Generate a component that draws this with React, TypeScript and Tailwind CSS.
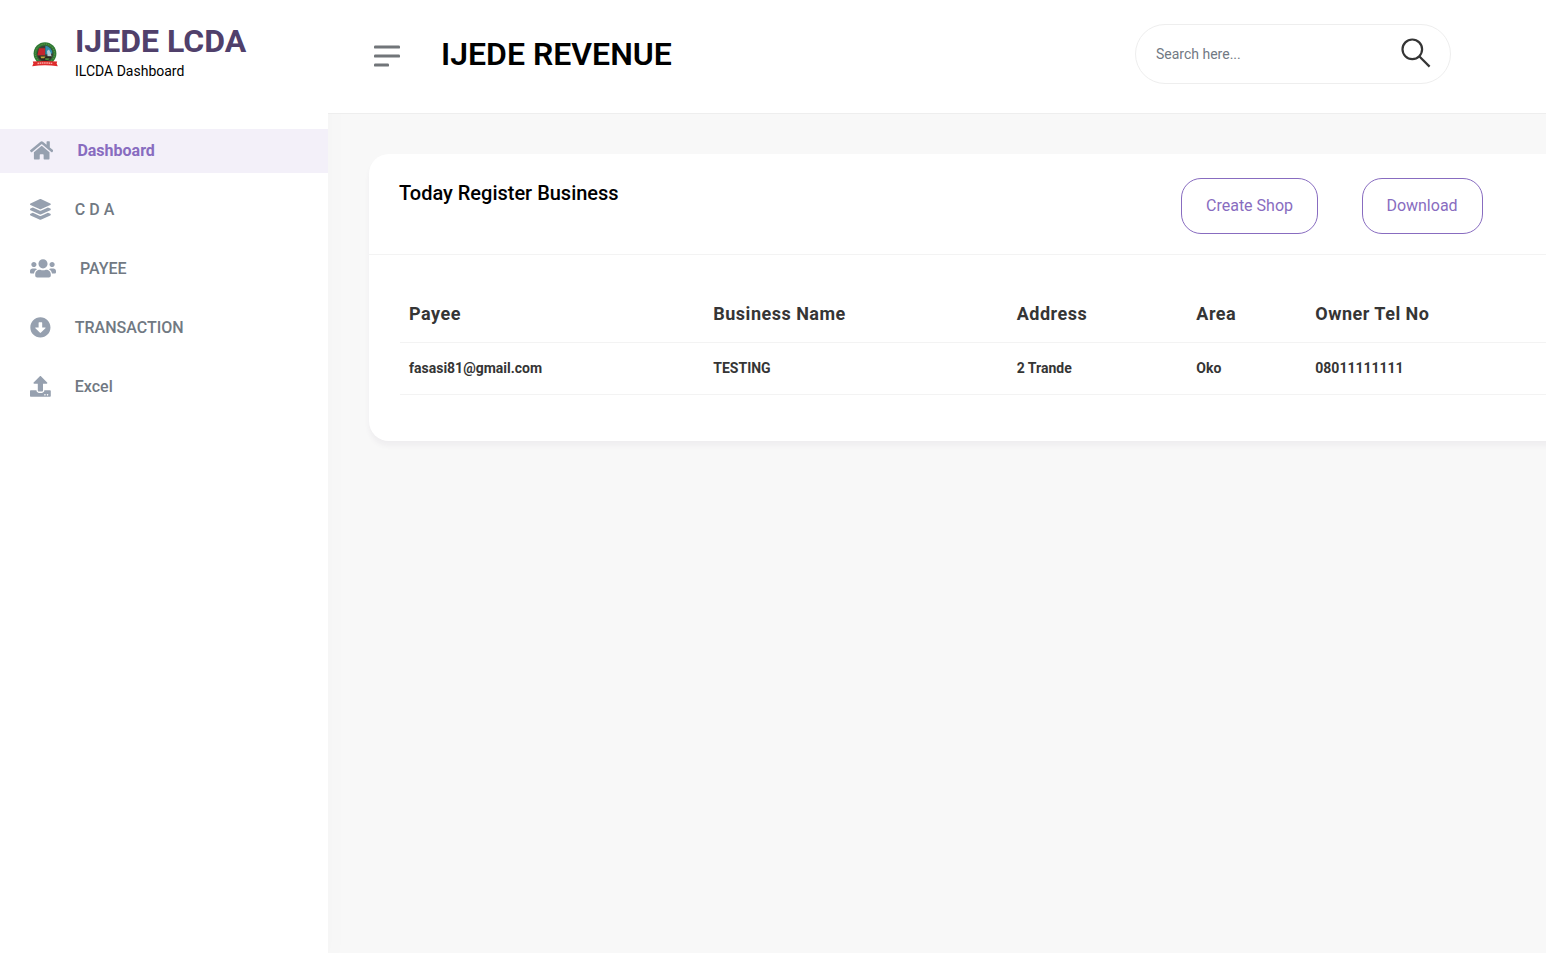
import {
  FaArrowAltCircleDown,
  FaHome,
  FaLayerGroup,
  FaUpload,
  FaUsers,
} from "react-icons/fa";

const navItems = [
  { label: "Dashboard", Icon: FaHome, iconWidth: "w-[23.4px]", active: true },
  { label: "C D A", Icon: FaLayerGroup, iconWidth: "w-[20.8px]", active: false },
  { label: "PAYEE", Icon: FaUsers, iconWidth: "w-[26px]", active: false },
  { label: "TRANSACTION", Icon: FaArrowAltCircleDown, iconWidth: "w-[20.8px]", active: false },
  { label: "Excel", Icon: FaUpload, iconWidth: "w-[20.8px]", active: false },
];

const columns = [
  { title: "Payee", value: "fasasi81@gmail.com" },
  { title: "Business Name", value: "TESTING" },
  { title: "Address", value: "2 Trande" },
  { title: "Area", value: "Oko" },
  { title: "Owner Tel No", value: "08011111111" },
];

const tableGrid =
  "grid grid-cols-[304.3px_303.4px_179.6px_119px_1fr] border-b border-[#f3f3f3]";

function Crest() {
  return (
    <svg width="30" height="30" viewBox="0 0 30 30" className="shrink-0">
      <circle cx="15" cy="13.6" r="11.4" fill="#2f7a35" />
      <circle cx="15" cy="13.6" r="9.6" fill="none" stroke="#6f9a4a" strokeWidth="1" strokeDasharray="1 1.3" />
      <circle cx="15" cy="13.6" r="8.2" fill="#3c3f35" />
      <path d="M9 8.2h6v7H7.4z" fill="#c3272f" />
      <path d="M15.4 5.8a8 8 0 0 1 7 7.6l-7 1z" fill="#2f8fae" />
      <path d="M17 11l2-1.5 1.6 3 1 4.2h-4z" fill="#b5cdd6" />
      <path d="M8.2 16.2h13.6a7.4 7.4 0 0 1-13.6 0z" fill="#2b2c22" />
      <path d="M10.5 16.5h5l-1.4 1.8h-3z" fill="#c5a93a" />
      <path d="M15.2 18.3h4.6l-1.4 1.8h-3z" fill="#4c8a3a" />
      <path d="M2.8 21.4Q15 20.6 27.2 21.4L26.6 23.6 27.8 26.3Q15 24.4 2.2 26.3L3.4 23.6z" fill="#df2b2c" />
      <path d="M7.5 23.4Q15 22.4 22.5 23.4" fill="none" stroke="#f5a6a2" strokeWidth="1.5" strokeDasharray="1.6 0.6" />
    </svg>
  );
}

export default function App() {
  return (
    <div className="flex h-[953px] w-full overflow-hidden bg-[#f8f8f8] font-['Roboto',sans-serif] text-black">
      <aside className="z-10 flex w-[328px] shrink-0 flex-col bg-white shadow-[0_15px_30px_0_rgba(0,0,0,0.02)]">
        <div className="flex h-[113px] items-start pl-[30px] pt-6">
          <div className="pt-4">
            <Crest />
          </div>
          <div className="pl-[15px]">
            <div className="text-[32px] font-bold leading-[35px] text-[#50406b]">IJEDE LCDA</div>
            <div className="text-sm leading-6">ILCDA Dashboard</div>
          </div>
        </div>
        <nav className="flex flex-col gap-[15px] pt-4">
          {navItems.map(({ label, Icon, iconWidth, active }) => (
            <a
              key={label}
              className={
                active
                  ? "flex h-11 items-center gap-6 bg-[#f3f0f9] pl-[30px] text-base font-bold text-[#886cc0]"
                  : "flex h-11 items-center gap-6 pl-[30px] text-base font-medium text-[#717983]"
              }
            >
              <span className={iconWidth}>
                <Icon className="mb-[1.5px] h-[20.8px] w-full text-[#96a0af]" />
              </span>
              <span>{label}</span>
            </a>
          ))}
        </nav>
      </aside>

      <div className="flex min-w-0 flex-1 flex-col">
        <header className="z-20 flex h-[114px] shrink-0 items-start border-b border-[#eeeeee] bg-white pl-[46px] pr-[95px]">
          <svg width="26" height="22" viewBox="0 0 26 22" className="mt-[45px]" fill="#717579">
            <rect y="0.6" width="26" height="3" rx="1.2" />
            <rect y="9.6" width="26" height="3" rx="1.2" />
            <rect y="18.6" width="15" height="3" rx="1.2" />
          </svg>
          <h1 className="ml-[41px] mt-[34px] text-[32px] font-semibold leading-10">IJEDE REVENUE</h1>
          <div className="ml-auto mt-6 flex h-[60px] w-[316px] items-center justify-between rounded-[30px] border border-[#eeeeee] pl-5 pr-[19px]">
            <span className="text-sm text-[#717983]">Search here...</span>
            <svg width="30" height="30" viewBox="0 0 30 30" className="mb-[3px]" fill="none" stroke="#353535" strokeWidth="2.2">
              <circle cx="11.3" cy="11.3" r="9.8" />
              <path d="M18.2 18.2L28.6 28.6" />
            </svg>
          </div>
        </header>

        <main className="pl-[41px] pt-10">
          <section className="relative z-20 h-[287px] w-[1260px] rounded-[20px] bg-white shadow-[0_5px_5px_0_rgba(82,63,105,0.05)]">
            <div className="flex h-[101px] items-start border-b border-[#f3f3f3] pl-[30px] pt-6">
              <h2 className="w-[782px] text-xl font-medium leading-[30px] tracking-[-0.01px]">Today Register Business</h2>
              <button className="h-14 w-[137px] rounded-[20px] border border-[#886cc0] text-base text-[#886cc0]">
                Create Shop
              </button>
              <button className="ml-11 h-14 w-[121px] rounded-[20px] border border-[#886cc0] pr-px text-base text-[#886cc0]">
                Download
              </button>
            </div>
            <div className="pl-[31px] pt-[30px]">
              <div className={tableGrid}>
                {columns.map(({ title }) => (
                  <div key={title} className="flex h-[57px] items-center pl-[9px] text-lg font-bold tracking-[0.5px] text-[#353535]">
                    {title}
                  </div>
                ))}
              </div>
              <div className={tableGrid}>
                {columns.map(({ title, value }) => (
                  <div key={title} className="flex h-[51px] items-center pb-0.5 pl-[9px] text-sm font-bold text-[#353535]">
                    {value}
                  </div>
                ))}
              </div>
            </div>
          </section>
        </main>
      </div>
    </div>
  );
}
